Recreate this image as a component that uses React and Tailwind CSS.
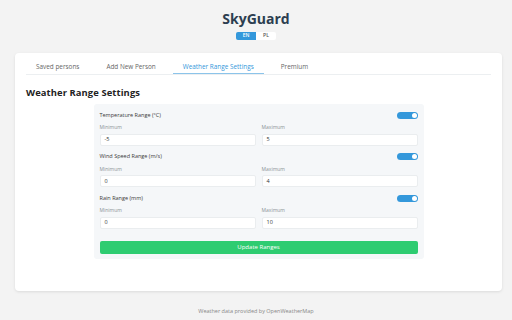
const ranges = [
  { label: "Temperature Range (°C)", min: "-5", max: "5" },
  { label: "Wind Speed Range (m/s)", min: "0", max: "4" },
  { label: "Rain Range (mm)", min: "0", max: "10" },
];

const tabs = ["Saved persons", "Add New Person", "Weather Range Settings", "Premium"];

const Toggle = () => (
  <div className="w-[21px] h-[7px] rounded-full bg-[#3498db] flex items-center justify-end px-[1px]">
    <div className="w-[5px] h-[5px] rounded-full bg-white" />
  </div>
);

const Field = ({ label, value }) => (
  <div className="flex-1 flex flex-col">
    <span className="text-[5px] text-[#8a9396] mb-[2px]">{label}</span>
    <div className="h-[12px] bg-white border border-[#eaedef] rounded-[2px] flex items-center px-[4px] text-[5.5px] text-[#333]">
      {value}
    </div>
  </div>
);

export default function App() {
  return (
    <div className="w-[512px] h-[320px] bg-[#f3f3f3] flex flex-col items-center font-['Open_Sans',sans-serif] overflow-hidden">
      <h1 className="mt-[9px] text-[14px] font-bold text-[#2c3e50] leading-[20px]">SkyGuard</h1>
      <div className="flex mt-[3px] text-[5px] font-semibold">
        <span className="w-[20px] h-[8px] bg-[#3498db] text-white flex items-center justify-center rounded-l-[2px]">EN</span>
        <span className="w-[20px] h-[8px] bg-white text-[#555] flex items-center justify-center rounded-r-[2px]">PL</span>
      </div>

      <div className="mt-[13px] self-start ml-[15px] w-[487px] h-[238px] bg-white rounded-[4px] shadow-[0_1px_3px_rgba(0,0,0,0.1)] px-[11px] pt-[7px]">
        <div className="flex gap-[7px] border-b border-[#eceff1]">
          {tabs.map((t, i) => (
            <div
              key={t}
              className={
                "px-[10px] h-[14px] flex items-center text-[6.4px] " +
                (i === 2 ? "text-[#3498db] border-b border-[#8cc4ea] mb-[-1px]" : "text-[#666]")
              }
            >
              {t}
            </div>
          ))}
        </div>

        <h2 className="mt-[11px] text-[9.4px] font-bold text-[#222] leading-[14px] tracking-[0.1px]">Weather Range Settings</h2>

        <div className="mx-auto mt-[4px] w-[330px] bg-[#f5f7f9] rounded-[3px] px-[6px] pt-[6px] pb-[5px] flex flex-col">
          {ranges.map((r) => (
            <div key={r.label} className="flex flex-col mb-[6px]">
              <div className="flex items-center justify-between h-[10px]">
                <span className="text-[5.5px] font-medium text-[#3a3a3a]">{r.label}</span>
                <Toggle />
              </div>
              <div className="flex gap-[6px] mt-[4px]">
                <Field label="Minimum" value={r.min} />
                <Field label="Maximum" value={r.max} />
              </div>
            </div>
          ))}
          <button className="mt-[6px] h-[13px] w-full bg-[#2ecc71] rounded-[2px] text-white text-[6px] flex items-center justify-center">
            Update Ranges
          </button>
        </div>
      </div>

      <p className="mt-[16px] text-[5.5px] text-[#888]">Weather data provided by OpenWeatherMap</p>
    </div>
  );
}
